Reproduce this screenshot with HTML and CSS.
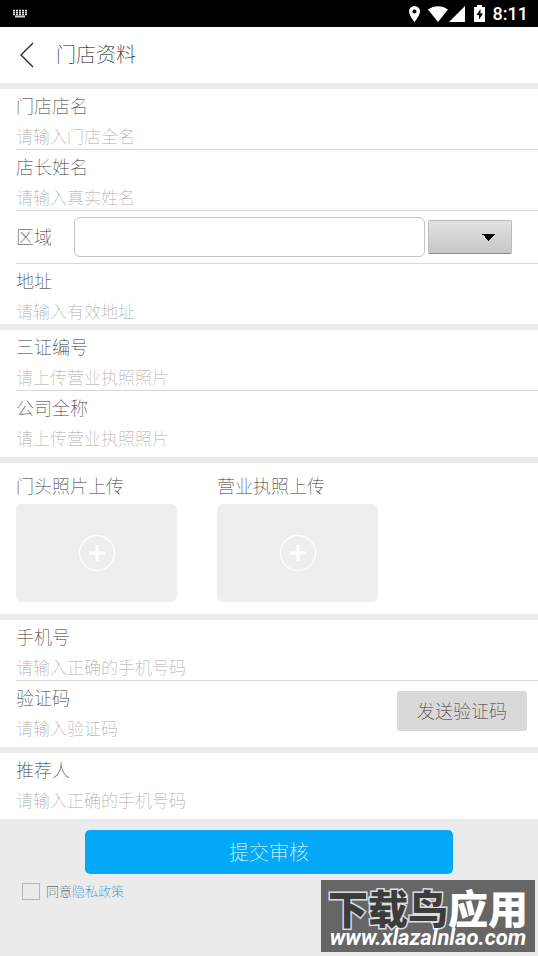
FILE: index.html
```html
<!DOCTYPE html>
<html lang="zh-CN">
<head>
<meta charset="utf-8">
<meta name="viewport" content="width=device-width, initial-scale=1">
<title>门店资料</title>
<link rel="stylesheet" href="styles.css">
</head>
<body>
<div class="status-bar">
  <svg class="status-keyboard" width="17" height="10" viewBox="0 0 17 10" aria-hidden="true">
    <g stroke="#e8e8e8" stroke-dasharray="2 1" fill="none">
      <path d="M1 1.5h15M1 3.5h15M1 5.5h15" stroke-width="1.5"/>
    </g>
    <path d="M3 7.500h10" stroke="#ccc" stroke-width="2"/>
  </svg>
  <div class="status-icons">
    <svg class="icon-pin" width="11" height="16" viewBox="0 0 11 16" aria-hidden="true"><path fill="#fff" fill-rule="evenodd" d="M5.500 0A5.500 5.500 0 0 0 0 5.500C0 9.500 5.500 16 5.500 16S11 9.500 11 5.500A5.500 5.500 0 0 0 5.500 0zm0 7.500a2 2 0 1 1 0-4 2 2 0 0 1 0 4z"/></svg>
    <svg class="icon-wifi" width="20" height="16" viewBox="0 0 20 16" aria-hidden="true"><path fill="#fff" d="M0 3.500C6-1 14-1 20 3.500L10 16z"/></svg>
    <svg class="icon-signal" width="16" height="16" viewBox="0 0 16 16" aria-hidden="true"><path fill="#fff" d="M16 0v16H0z"/></svg>
    <svg class="icon-battery" width="11" height="17" viewBox="0 0 11 17" aria-hidden="true"><path fill="#fff" d="M3 0h5v2h3v15H0V2h3z"/><path fill="#000" d="M6.500 4L2.500 10h2.500v4.500L9 8.500H6.500z"/></svg>
    <span class="clock">8:11</span>
  </div>
</div>

<header class="title-bar">
  <button class="back" type="button" aria-label="返回">
    <svg width="14" height="26" viewBox="0 0 14 26" aria-hidden="true"><path d="M13 1L1 13l12 12" fill="none" stroke="#222" stroke-width="1.300"/></svg>
  </button>
  <h1>门店资料</h1>
</header>

<form class="form">
  <section class="group">
    <div class="field">
      <label for="shop">门店店名</label>
      <input id="shop" type="text" placeholder="请输入门店全名">
    </div>
    <div class="field">
      <label for="manager">店长姓名</label>
      <input id="manager" type="text" placeholder="请输入真实姓名">
    </div>
    <div class="field region">
      <label for="region">区域</label>
      <input id="region" type="text">
      <select aria-label="选择区域"><option></option></select>
    </div>
    <div class="field">
      <label for="address">地址</label>
      <input id="address" type="text" placeholder="请输入有效地址">
    </div>
  </section>

  <section class="group roomy">
    <div class="field">
      <label for="license">三证编号</label>
      <input id="license" type="text" placeholder="请上传营业执照照片">
    </div>
    <div class="field">
      <label for="company">公司全称</label>
      <input id="company" type="text" placeholder="请上传营业执照照片">
    </div>
  </section>

  <section class="group uploads">
    <div class="upload">
      <span id="front-label">门头照片上传</span>
      <button type="button" aria-labelledby="front-label">
        <svg width="38" height="38" viewBox="0 0 38 38" aria-hidden="true"><circle cx="19" cy="19" r="17.500" fill="none" stroke="#fff" stroke-width="1.300"/><path d="M19 11v16M11 19h16" stroke="#fff" stroke-width="3"/></svg>
      </button>
    </div>
    <div class="upload">
      <span id="license-label">营业执照上传</span>
      <button type="button" aria-labelledby="license-label">
        <svg width="38" height="38" viewBox="0 0 38 38" aria-hidden="true"><circle cx="19" cy="19" r="17.500" fill="none" stroke="#fff" stroke-width="1.300"/><path d="M19 11v16M11 19h16" stroke="#fff" stroke-width="3"/></svg>
      </button>
    </div>
  </section>

  <section class="group roomy">
    <div class="field">
      <label for="phone">手机号</label>
      <input id="phone" type="tel" placeholder="请输入正确的手机号码">
    </div>
    <div class="code-row">
      <div class="field">
        <label for="code">验证码</label>
        <input id="code" type="text" placeholder="请输入验证码">
      </div>
      <button class="send" type="button">发送验证码</button>
    </div>
  </section>

  <section class="group roomy">
    <div class="field">
      <label for="referrer">推荐人</label>
      <input id="referrer" type="text" placeholder="请输入正确的手机号码">
    </div>
  </section>

  <div class="actions">
    <button class="submit" type="submit">提交审核</button>
    <div class="agree">
      <input id="agree" type="checkbox">
      <label for="agree">同意</label><a href="#privacy">隐私政策</a>
    </div>
  </div>
</form>

<div class="watermark">
  <div class="watermark-name"><span>下载鸟</span>应用</div>
  <div class="watermark-url">www.xlazalnlao.com</div>
</div>
</body>
</html>
```
FILE: styles.css
```css
* {
  box-sizing: border-box;
}

body {
  margin: 0;
  min-height: 100vh;
  position: relative;
  background: #ebebeb;
  color: #333;
  font-family: "Noto Sans CJK SC", sans-serif;
  font-size: 18px;
  font-weight: 100;
}

button,
input,
select {
  margin: 0;
  padding: 0;
  border: 0;
  border-radius: 0;
  font: inherit;
  color: inherit;
}

.status-bar {
  display: flex;
  align-items: center;
  justify-content: space-between;
  height: 27px;
  padding: 0 10px 0 12px;
  background: #000;
}

.status-icons {
  display: flex;
  align-items: center;
}

.icon-wifi {
  margin-left: 8px;
}

.icon-signal {
  margin-left: 1px;
}

.icon-battery {
  margin: 0 8px 0 9px;
}

.clock {
  color: #fff;
  font: 500 18px/27px Roboto, sans-serif;
}

.title-bar {
  display: flex;
  align-items: center;
  gap: 22px;
  height: 56px;
  padding: 0 20px;
  background: #fff;
  color: #000;
}

.back {
  display: flex;
  background: none;
}

h1 {
  margin: 0;
  padding-bottom: 2px;
  font-size: 20px;
  font-weight: inherit;
  line-height: 28px;
}

.group {
  margin-top: 6px;
  padding-left: 16px;
  background: #fff;
}

.roomy {
  padding-bottom: 6px;
}

.field {
  display: flex;
  flex-direction: column;
  border-bottom: 1px solid #d9d9d9;
}

.group > :last-child,
.code-row .field {
  border-bottom: 0;
}

.field label {
  padding-bottom: 2px;
  line-height: 32px;
}

.field input {
  width: 100%;
  height: 26px;
  padding-bottom: 2px;
  background: none;
  font-size: 17px;
}

.field input::placeholder {
  color: #aaa;
  opacity: 1;
}

.region {
  flex-direction: row;
  align-items: center;
  height: 53px;
  padding-right: 26px;
}

.region label {
  flex: none;
  width: 58px;
}

.region input {
  flex: 1;
  min-width: 0;
  height: 40px;
  padding: 0 8px;
  border: 1px solid #c4c4c4;
  border-radius: 6px;
}

.region select {
  flex: none;
  width: 84px;
  height: 34px;
  margin-left: 3px;
  appearance: none;
  border: 1px solid #bbb;
  border-bottom-color: #888;
  border-radius: 2px;
  background:
    linear-gradient(to top right, transparent 50%, #000 0) 53px 13px / 7px 7px no-repeat,
    linear-gradient(to top left, transparent 50%, #000 0) 60px 13px / 7px 7px no-repeat,
    linear-gradient(#e2e2e2, #c6c6c6);
}

.uploads {
  display: flex;
  gap: 40px;
  padding-bottom: 12px;
}

.upload {
  width: 161px;
}

.upload span {
  display: block;
  padding: 6px 0 2px;
  line-height: 33px;
}

.upload button {
  display: flex;
  align-items: center;
  justify-content: center;
  width: 100%;
  height: 98px;
  border-radius: 6px;
  background: #eee;
}

.code-row {
  display: flex;
  align-items: center;
  padding-right: 11px;
}

.code-row .field {
  flex: 1;
}

.send,
.submit {
  padding-bottom: 2px;
}

.send {
  width: 130px;
  height: 40px;
  border-radius: 3px;
  background: #d9d9d9;
}

.actions {
  padding: 11px 16px;
}

.submit {
  display: block;
  width: 100%;
  max-width: 368px;
  height: 44px;
  margin: 0 auto;
  border-radius: 5px;
  background: #03a9f7;
  color: #fff;
  font-size: 20px;
}

.agree {
  display: flex;
  align-items: center;
  margin: 7px 0 0 6px;
  font-size: 13px;
  line-height: 20px;
}

.agree input {
  width: 18px;
  height: 17px;
  margin-right: 6px;
  appearance: none;
  border: 1px solid #b5b5bb;
}

.agree a {
  color: #0088cc;
  text-decoration: none;
}

.watermark {
  position: absolute;
  right: 3px;
  bottom: 4px;
  width: 214px;
  height: 72px;
  padding-top: 6px;
  background: #666;
  color: #fff;
  text-align: center;
  white-space: nowrap;
}

.watermark-name {
  font-size: 40px;
  font-weight: 900;
  line-height: 42px;
}

.watermark-name span {
  color: #3c3c3c;
  paint-order: stroke;
  -webkit-text-stroke: 3px #ddd;
}

.watermark-url {
  font: italic 700 22px/20px Roboto, sans-serif;
}
```
